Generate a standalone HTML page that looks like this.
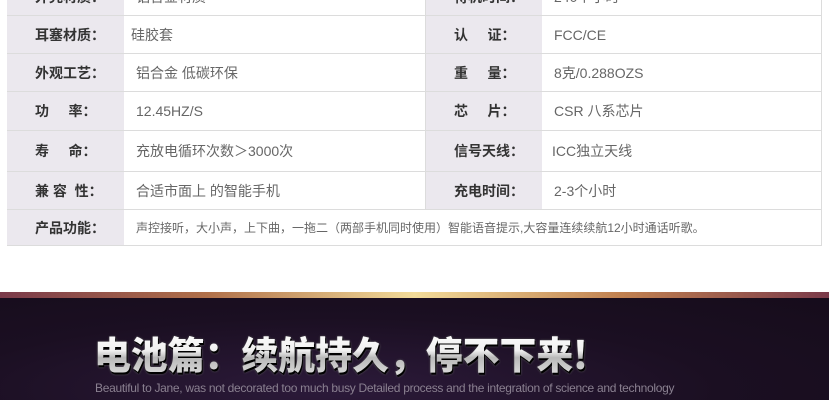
<!DOCTYPE html>
<html><head><meta charset="utf-8"><style>
body{margin:0;width:829px;height:400px;overflow:hidden;background:#fff;font-family:"Liberation Sans","Noto Sans CJK SC",sans-serif;position:relative}
.r{position:absolute;left:7px;width:815px;height:38px;border-bottom:1px solid #dcdcdc;box-sizing:border-box}
.c{position:absolute;top:0;height:100%;display:flex;align-items:center;font-size:14px;color:#666;box-sizing:border-box}
.l{background:#ebe8ee;color:#333;font-weight:bold;padding-left:28px;width:117px}
.v{padding-left:12px}
.dark{position:absolute;left:0;top:297px;width:829px;height:103px;background:radial-gradient(ellipse at 40% 90%,#2c1a3a 0%,#1b0f22 55%,#160c1b 100%)}
.bar{position:absolute;left:0;top:292px;width:829px;height:6px;background:linear-gradient(90deg,#7a3a4a 0%,#b0704a 25%,#f3dc9a 50%,#c08050 75%,#7a3a4a 100%)}
.title{position:absolute;left:94px;top:329px;font-size:38px;font-weight:900;letter-spacing:0;color:#eee;background:linear-gradient(#ffffff,#f0f0f0 45%,#b8b8b8 60%,#e0e0e0);-webkit-background-clip:text;background-clip:text;-webkit-text-fill-color:transparent;font-family:"Noto Sans CJK SC",sans-serif;line-height:48px;filter:drop-shadow(1px 2px 0 #000) drop-shadow(0 0 1px #555);transform:scaleX(0.97);transform-origin:left}
.sub{position:absolute;left:95px;top:381px;font-size:12px;color:#8a8090;letter-spacing:-0.3px}
</style></head><body>
<div style="position:absolute;left:7px;top:0;width:815px;height:246px;border-left:1px solid #dcdcdc;border-right:1px solid #dcdcdc;box-sizing:border-box"></div>
<div class="r" style="top:-22px">
<div class="c l" style="left:0">外壳材质：</div><div class="c v" style="left:117px">铝合金材质</div>
<div class="c l" style="left:418px;border-left:1px solid #dcdcdc">待机时间：</div><div class="c v" style="left:535px">240个小时</div></div>
<div class="r" style="top:16px">
<div class="c l" style="left:0">耳塞材质：</div><div class="c v" style="left:117px;padding-left:7px">硅胶套</div>
<div class="c l" style="left:418px;border-left:1px solid #dcdcdc">认&nbsp;&nbsp;&nbsp;&nbsp;&nbsp;证：</div><div class="c v" style="left:535px">FCC/CE</div></div>
<div class="r" style="top:54px">
<div class="c l" style="left:0">外观工艺：</div><div class="c v" style="left:117px">铝合金 低碳环保</div>
<div class="c l" style="left:418px;border-left:1px solid #dcdcdc">重&nbsp;&nbsp;&nbsp;&nbsp;&nbsp;量：</div><div class="c v" style="left:535px">8克/0.288OZS</div></div>
<div class="r" style="top:92px;height:39px">
<div class="c l" style="left:0">功&nbsp;&nbsp;&nbsp;&nbsp;&nbsp;率：</div><div class="c v" style="left:117px">12.45HZ/S</div>
<div class="c l" style="left:418px;border-left:1px solid #dcdcdc">芯&nbsp;&nbsp;&nbsp;&nbsp;&nbsp;片：</div><div class="c v" style="left:535px">CSR 八系芯片</div></div>
<div class="r" style="top:131px;height:41px">
<div class="c l" style="left:0">寿&nbsp;&nbsp;&nbsp;&nbsp;&nbsp;命：</div><div class="c v" style="left:117px">充放电循环次数＞3000次</div>
<div class="c l" style="left:418px;border-left:1px solid #dcdcdc">信号天线：</div><div class="c v" style="left:535px;padding-left:10px">ICC独立天线</div></div>
<div class="r" style="top:172px;height:38px">
<div class="c l" style="left:0">兼 容&nbsp;&nbsp;性：</div><div class="c v" style="left:117px">合适市面上 的智能手机</div>
<div class="c l" style="left:418px;border-left:1px solid #dcdcdc">充电时间：</div><div class="c v" style="left:535px">2-3个小时</div></div>
<div class="r" style="top:210px;height:36px">
<div class="c l" style="left:0">产品功能：</div><div class="c v" style="left:117px;font-size:12px">声控接听，大小声，上下曲，一拖二（两部手机同时使用）智能语音提示,大容量连续续航12小时通话听歌。</div></div>
<div class="dark"></div>
<div class="bar"></div>
<div class="title">电池篇：续航持久，停不下来!</div>
<div class="sub">Beautiful to Jane, was not decorated too much busy Detailed process and the integration of science and technology</div>
</body></html>
